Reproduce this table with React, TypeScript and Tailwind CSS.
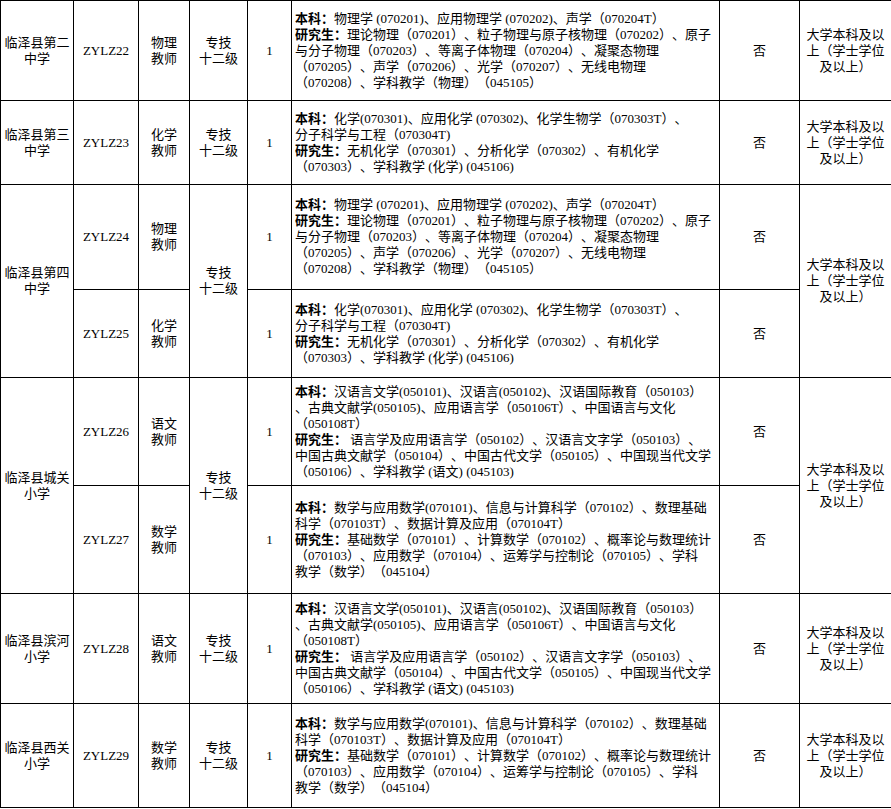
import React from "react";

type Row = {
  school?: { lines: string[]; span: number };
  code: string;
  post: string[];
  level?: number;
  count: string;
  content: string[];
  edu?: number;
  height: string;
};

const physics = [
  "本科：物理学 (070201)、应用物理学 (070202)、声学（070204T）",
  "研究生：理论物理（070201）、粒子物理与原子核物理（070202）、原子",
  "与分子物理（070203）、等离子体物理（070204）、凝聚态物理",
  "（070205）、声学（070206）、光学（070207）、无线电物理",
  "（070208）、学科教学（物理）（045105）",
];

const chem = [
  "本科：化学(070301)、应用化学 (070302)、化学生物学（070303T）、",
  "分子科学与工程（070304T)",
  "研究生：无机化学（070301）、分析化学（070302）、有机化学",
  "（070303）、学科教学 (化学) (045106)",
];

const chinese = [
  "本科：汉语言文学(050101)、汉语言(050102)、汉语国际教育（050103）",
  "、古典文献学(050105)、应用语言学（050106T）、中国语言与文化",
  "（050108T）",
  "研究生： 语言学及应用语言学（050102）、汉语言文字学（050103）、",
  "中国古典文献学（050104）、中国古代文学（050105）、中国现当代文学",
  "（050106）、学科教学 (语文) (045103)",
];

const math = [
  "本科：数学与应用数学(070101)、信息与计算科学（070102）、数理基础",
  "科学（070103T）、数据计算及应用（070104T）",
  "研究生：基础数学（070101）、计算数学（070102）、概率论与数理统计",
  "（070103）、应用数学（070104）、运筹学与控制论（070105）、学科",
  "教学（数学）（045104）",
];

const rows: Row[] = [
  { school: { lines: ["临泽县第二", "中学"], span: 1 }, code: "ZYLZ22", post: ["物理", "教师"], level: 1, count: "1", content: physics, edu: 1, height: "h-[100px]" },
  { school: { lines: ["临泽县第三", "中学"], span: 1 }, code: "ZYLZ23", post: ["化学", "教师"], level: 1, count: "1", content: chem, edu: 1, height: "h-[84px]" },
  { school: { lines: ["临泽县第四", "中学"], span: 2 }, code: "ZYLZ24", post: ["物理", "教师"], level: 2, count: "1", content: physics, edu: 2, height: "h-[105px]" },
  { code: "ZYLZ25", post: ["化学", "教师"], count: "1", content: chem, height: "h-[88px]" },
  { school: { lines: ["临泽县城关", "小学"], span: 2 }, code: "ZYLZ26", post: ["语文", "教师"], level: 2, count: "1", content: chinese, edu: 2, height: "h-[108px]" },
  { code: "ZYLZ27", post: ["数学", "教师"], count: "1", content: math, height: "h-[108px]" },
  { school: { lines: ["临泽县滨河", "小学"], span: 1 }, code: "ZYLZ28", post: ["语文", "教师"], level: 1, count: "1", content: chinese, edu: 1, height: "h-[110px]" },
  { school: { lines: ["临泽县西关", "小学"], span: 1 }, code: "ZYLZ29", post: ["数学", "教师"], level: 1, count: "1", content: math, edu: 1, height: "h-[104px]" },
];

const Lines = ({ lines }: { lines: string[] }) => (
  <>
    {lines.map((l, i) => (
      <div key={i} className="whitespace-nowrap">
        {l}
      </div>
    ))}
  </>
);

const ContentLine = ({ text }: { text: string }) => {
  const m = text.match(/^(本科：|研究生：)(.*)$/);
  if (!m) return <div className="whitespace-nowrap">{text}</div>;
  return (
    <div className="whitespace-nowrap">
      <span className="font-bold">{m[1]}</span>
      {m[2]}
    </div>
  );
};

const cell = "border border-black text-center align-middle px-0";

export default function App() {
  return (
    <div className="bg-white w-[891px] h-[809px] overflow-hidden font-['Liberation_Serif','Noto_Sans_CJK_SC',serif] text-[13px] leading-[16px] text-black [text-spacing-trim:space-all]">
      <table className="table-fixed border-collapse w-[891px]">
        <colgroup>
          <col className="w-[73px]" />
          <col className="w-[65px]" />
          <col className="w-[51px]" />
          <col className="w-[58px]" />
          <col className="w-[44px]" />
          <col className="w-[428px]" />
          <col className="w-[80px]" />
          <col className="w-[92px]" />
        </colgroup>
        <tbody>
          {rows.map((r) => (
            <tr key={r.code} className={r.height}>
              {r.school && (
                <td rowSpan={r.school.span} className={cell}>
                  <Lines lines={r.school.lines} />
                </td>
              )}
              <td className={cell}>{r.code}</td>
              <td className={cell}>
                <Lines lines={r.post} />
              </td>
              {r.level && (
                <td rowSpan={r.level} className={cell}>
                  <Lines lines={["专技", "十二级"]} />
                </td>
              )}
              <td className={cell}>{r.count}</td>
              <td className="border border-black align-middle pl-[3px] text-left">
                {r.content.map((l, i) => (
                  <ContentLine key={i} text={l} />
                ))}
              </td>
              <td className={cell}>否</td>
              {r.edu && (
                <td rowSpan={r.edu} className={cell}>
                  <Lines lines={["大学本科及以", "上（学士学位", "及以上）"]} />
                </td>
              )}
            </tr>
          ))}
        </tbody>
      </table>
    </div>
  );
}
